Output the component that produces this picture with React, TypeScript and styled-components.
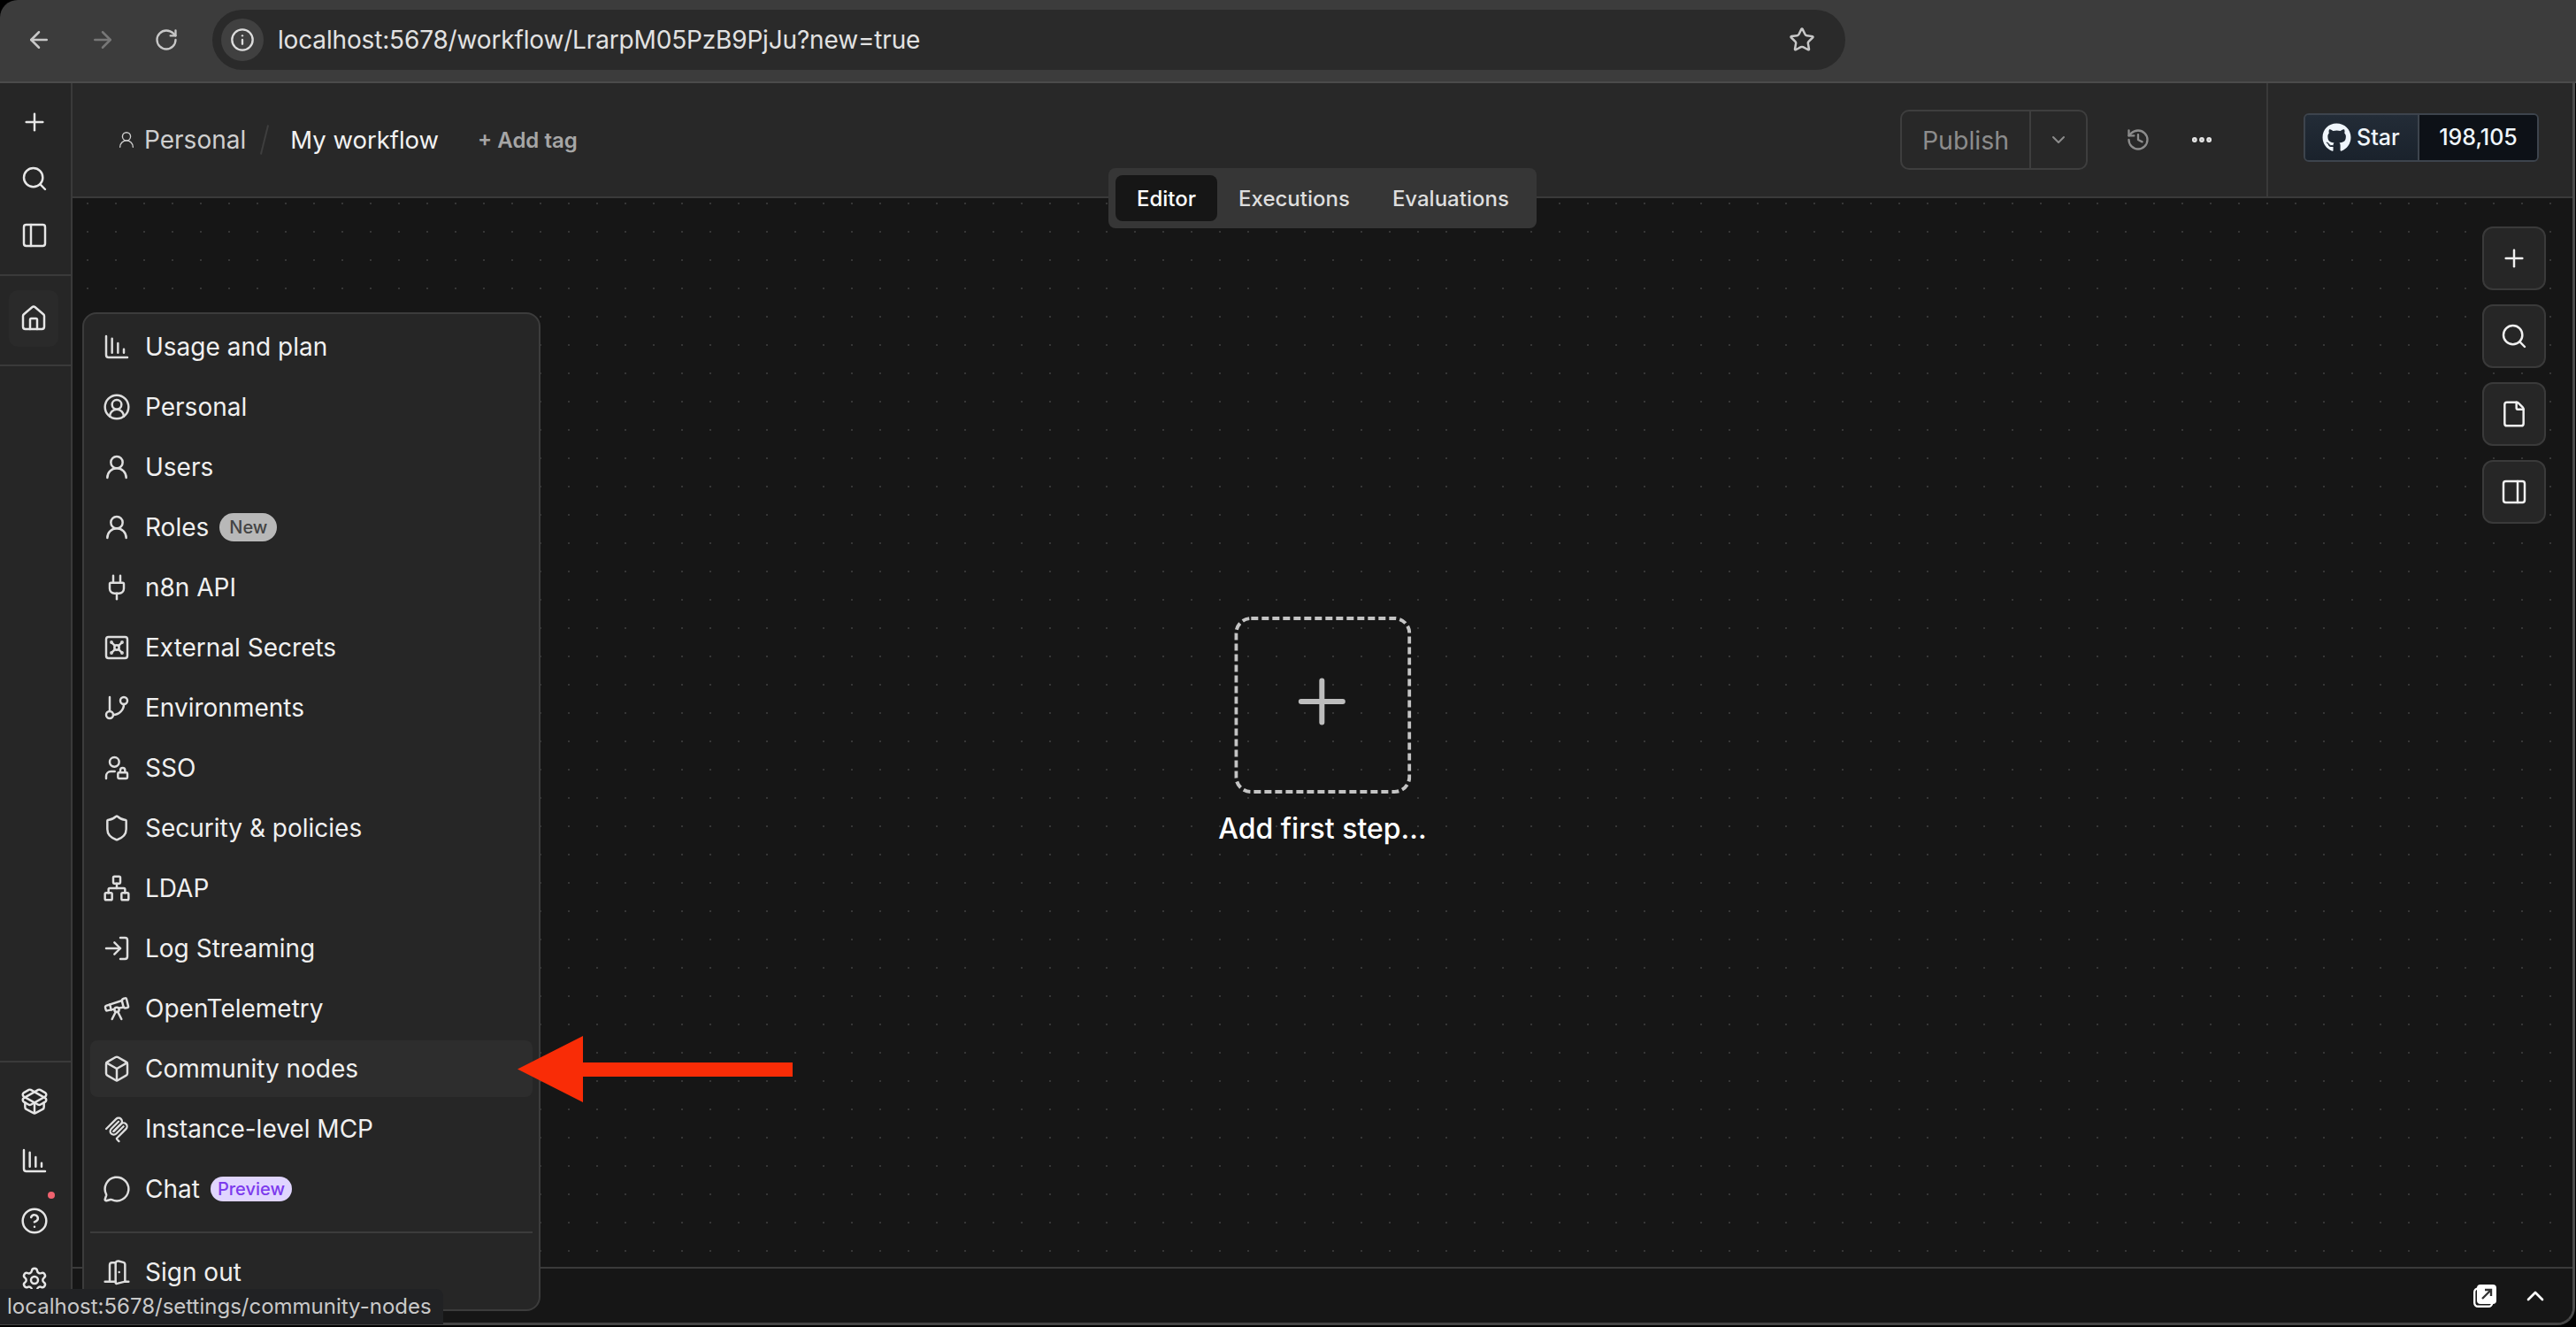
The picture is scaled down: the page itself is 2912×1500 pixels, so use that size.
import React from "react";
import styled, { createGlobalStyle } from "styled-components";
import {
  ArrowLeft,
  ArrowRight,
  Box,
  ChartColumnDecreasing,
  ChevronDown,
  ChevronUp,
  CircleHelp,
  CircleUserRound,
  DoorOpen,
  Ellipsis,
  File,
  GitBranch,
  History,
  House,
  Info,
  LogIn,
  MessageCircle,
  Network,
  PackageOpen,
  PanelLeft,
  PanelRight,
  Plug,
  Plus,
  RotateCw,
  Search,
  Settings,
  Shield,
  Star,
  Telescope,
  UserLock,
  UserRound,
  Vault,
} from "lucide-react";
import { FaGithub } from "react-icons/fa";

const GlobalStyle = createGlobalStyle`
  html, body {
    margin: 0;
    padding: 0;
    background: #000;
  }
  body {
    font-family: Inter, "Liberation Sans", sans-serif;
    -webkit-font-smoothing: antialiased;
  }
`;

// n8n icons sit at 16px css on a 2x screen, so 32 here
const ICON = 32;
const STROKE = 1.85;

const McpIcon = ({ size = ICON }: { size?: number }) => (
  <svg width={size} height={size} viewBox="0 0 195 195" fill="none" stroke="currentColor" strokeWidth="14" strokeLinecap="round">
    <path d="M25 97.85L92.88 29.97C102.26 20.6 117.45 20.6 126.82 29.97C136.2 39.34 136.2 54.54 126.82 63.91L75.56 115.18" />
    <path d="M76.27 114.47L126.82 63.91C136.2 54.54 151.39 54.54 160.77 63.91L161.12 64.27C170.49 73.64 170.49 88.83 161.12 98.21L99.72 159.6C96.6 162.72 96.6 167.79 99.72 170.91L112.33 183.52" />
    <path d="M109.85 46.94L59.65 97.15C50.28 106.52 50.28 121.71 59.65 131.09C69.02 140.46 84.22 140.46 93.59 131.09L143.79 80.88" />
  </svg>
);

const ExternalSquareIcon = () => (
  <svg width="26" height="26" viewBox="0 0 26 26">
    <rect x="1.2" y="4.5" width="20" height="20.3" rx="4" fill="none" stroke="#fff" strokeWidth="2.4" />
    <rect x="4" y="0" width="22" height="22" rx="4" fill="#fff" />
    <path d="M10 16L20 6M13 6h7v7" fill="none" stroke="#333" strokeWidth="2.4" />
  </svg>
);

const AddStepShape = () => (
  <svg width="200" height="200" viewBox="0 0 200 200" fill="none">
    <rect x="2" y="2" width="196" height="196" rx="17" stroke="#c4c4c4" strokeWidth="4" strokeDasharray="8 4" />
    <path d="M75.5 96h47M99 72.5v47" stroke="#bdbdbd" strokeWidth="6" strokeLinecap="round" />
  </svg>
);

const RedArrow = () => (
  <svg width="311" height="75" viewBox="0 0 311 75">
    <path d="M0 37.5L74 0V30H311V46H74V75Z" fill="#f92c06" />
  </svg>
);

const menuItems = [
  { label: "Usage and plan", icon: <ChartColumnDecreasing size={ICON} strokeWidth={STROKE} /> },
  { label: "Personal", icon: <CircleUserRound size={ICON} strokeWidth={STROKE} /> },
  { label: "Users", icon: <UserRound size={ICON} strokeWidth={STROKE} /> },
  { label: "Roles", icon: <UserRound size={ICON} strokeWidth={STROKE} />, tag: "New" },
  { label: "n8n API", icon: <Plug size={ICON} strokeWidth={STROKE} /> },
  { label: "External Secrets", icon: <Vault size={ICON} strokeWidth={STROKE} /> },
  { label: "Environments", icon: <GitBranch size={ICON} strokeWidth={STROKE} /> },
  { label: "SSO", icon: <UserLock size={ICON} strokeWidth={STROKE} /> },
  { label: "Security & policies", icon: <Shield size={ICON} strokeWidth={STROKE} /> },
  { label: "LDAP", icon: <Network size={ICON} strokeWidth={STROKE} /> },
  { label: "Log Streaming", icon: <LogIn size={ICON} strokeWidth={STROKE} /> },
  { label: "OpenTelemetry", icon: <Telescope size={ICON} strokeWidth={STROKE} /> },
  { label: "Community nodes", icon: <Box size={ICON} strokeWidth={STROKE} />, hovered: true },
  { label: "Instance-level MCP", icon: <McpIcon /> },
  { label: "Chat", icon: <MessageCircle size={ICON} strokeWidth={STROKE} />, preview: "Preview" },
];

export default function App() {
  return (
    <Page>
      <GlobalStyle />
      <BrowserBar>
        <NavButton><ArrowLeft size={30} strokeWidth={2} /></NavButton>
        <NavButton $dim><ArrowRight size={30} strokeWidth={2} /></NavButton>
        <NavButton><RotateCw size={28} strokeWidth={2} /></NavButton>
        <AddressBar>
          <SiteInfo><Info size={28} strokeWidth={2} /></SiteInfo>
          <UrlText>localhost:5678/workflow/LrarpM05PzB9PjJu?new=true</UrlText>
          <Bookmark><Star size={30} strokeWidth={2} /></Bookmark>
        </AddressBar>
      </BrowserBar>

      <Body>
        <Sidebar>
          <SideGroup>
            <SideButton><Plus size={ICON} strokeWidth={STROKE} /></SideButton>
            <SideButton><Search size={ICON} strokeWidth={STROKE} /></SideButton>
            <SideButton><PanelLeft size={ICON} strokeWidth={STROKE} /></SideButton>
          </SideGroup>
          <HomeGroup>
            <HomeButton><House size={ICON} strokeWidth={STROKE} /></HomeButton>
          </HomeGroup>
          <SideFooter>
            <SideFooterRow><PackageOpen size={ICON} strokeWidth={STROKE} /></SideFooterRow>
            <SideFooterRow><ChartColumnDecreasing size={ICON} strokeWidth={STROKE} /></SideFooterRow>
            <SideFooterRow>
              <CircleHelp size={ICON} strokeWidth={STROKE} />
              <NoticeDot />
            </SideFooterRow>
            <SideFooterRow><Settings size={ICON} strokeWidth={STROKE} /></SideFooterRow>
          </SideFooter>
        </Sidebar>

        <Main>
          <Header>
            <Crumb>
              <UserRound size={22} strokeWidth={1.5} />
              <span>Personal</span>
            </Crumb>
            <CrumbSlash />
            <WorkflowName>My workflow</WorkflowName>
            <AddTag>+ Add tag</AddTag>
            <HeaderActions>
              <PublishButton>
                <PublishLabel>Publish</PublishLabel>
                <PublishCaret><ChevronDown size={24} strokeWidth={2} /></PublishCaret>
              </PublishButton>
              <HistoryIcon><History size={28} strokeWidth={2} /></HistoryIcon>
              <MoreIcon><Ellipsis size={28} strokeWidth={3} /></MoreIcon>
            </HeaderActions>
            <GithubSection>
              <GithubBadge>
                <GithubStar><FaGithub size={33} />Star</GithubStar>
                <GithubCount>198,105</GithubCount>
              </GithubBadge>
            </GithubSection>
          </Header>

          <Tabs>
            <Tab $active>Editor</Tab>
            <Tab>Executions</Tab>
            <Tab>Evaluations</Tab>
          </Tabs>

          <Canvas>
            <AddStep>
              <AddStepShape />
              <AddStepLabel>Add first step...</AddStepLabel>
            </AddStep>
            <CanvasTools>
              <ToolButton><Plus size={ICON} strokeWidth={STROKE} /></ToolButton>
              <ToolButton><Search size={ICON} strokeWidth={STROKE} /></ToolButton>
              <ToolButton><File size={ICON} strokeWidth={STROKE} /></ToolButton>
              <ToolButton><PanelRight size={ICON} strokeWidth={STROKE} /></ToolButton>
            </CanvasTools>
          </Canvas>

          <BottomBar>
            <ExternalSquareIcon />
            <ChevronUp size={32} strokeWidth={2} />
          </BottomBar>
        </Main>

        <Menu>
          {menuItems.map((item) => (
            <MenuRow key={item.label} $hovered={item.hovered}>
              <MenuIcon>{item.icon}</MenuIcon>
              <span>{item.label}</span>
              {item.tag && <NewTag>{item.tag}</NewTag>}
              {item.preview && <PreviewTag>{item.preview}</PreviewTag>}
            </MenuRow>
          ))}
          <MenuDivider />
          <MenuRow>
            <MenuIcon><DoorOpen size={ICON} strokeWidth={STROKE} /></MenuIcon>
            <span>Sign out</span>
          </MenuRow>
        </Menu>
      </Body>

      <ArrowMark><RedArrow /></ArrowMark>
      <StatusBubble>localhost:5678/settings/community-nodes</StatusBubble>
    </Page>
  );
}

const Page = styled.div`
  position: relative;
  width: 2912px;
  height: 1500px;
  overflow: hidden;
  background: #000;
`;

const BrowserBar = styled.div`
  display: flex;
  align-items: center;
  box-sizing: border-box;
  height: 94px;
  padding: 0 0 2px 8px;
  background: #3c3c3c;
  border-bottom: 2px solid #4b4b4b;
  border-top-left-radius: 20px;
`;

const NavButton = styled.div<{ $dim?: boolean }>`
  display: flex;
  align-items: center;
  justify-content: center;
  width: 72px;
  color: ${(p) => (p.$dim ? "#777" : "#c8c8c8")};
`;

const AddressBar = styled.div`
  display: flex;
  align-items: center;
  box-sizing: border-box;
  width: 1846px;
  height: 68px;
  margin-left: 16px;
  padding: 0 34px 0 10px;
  border-radius: 34px;
  background: #2a2a2a;
`;

const SiteInfo = styled.div`
  display: flex;
  align-items: center;
  justify-content: center;
  width: 48px;
  height: 48px;
  border-radius: 50%;
  background: #404040;
  color: #dcdcdc;
`;

const UrlText = styled.div`
  margin-left: 16px;
  font-size: 28px;
  letter-spacing: -0.16px;
  color: #e2e2e2;
`;

const Bookmark = styled.div`
  display: flex;
  margin-left: auto;
  color: #c8c8c8;
`;

const Body = styled.div`
  position: relative;
  display: flex;
  box-sizing: border-box;
  width: 2911px;
  height: 1404px;
  background: #161616;
  border-right: 3px solid #4a4a4a;
  border-bottom: 3px solid #454545;
  border-bottom-right-radius: 20px;
  overflow: hidden;
`;

const Sidebar = styled.div`
  display: flex;
  flex-direction: column;
  flex: none;
  box-sizing: border-box;
  width: 82px;
  background: #262626;
  border-right: 2px solid #3a3a3a;
  color: #e6e6e6;
`;

const SideGroup = styled.div`
  padding: 12px 0;
  border-bottom: 2px solid #3a3a3a;
`;

const SideButton = styled.div`
  display: flex;
  align-items: center;
  justify-content: center;
  height: 64px;
  padding-right: 2px;
`;

const HomeGroup = styled.div`
  padding: 16px 14px 20px 10px;
  border-bottom: 2px solid #3a3a3a;
`;

const HomeButton = styled(SideButton)`
  padding-right: 0;
  border-radius: 10px;
  background: #2a2a2a;
`;

const SideFooter = styled.div`
  margin-top: auto;
  padding: 10px 0 14px;
  border-top: 2px solid #3a3a3a;
`;

const SideFooterRow = styled.div`
  position: relative;
  display: flex;
  align-items: center;
  justify-content: center;
  height: 67.5px;
  padding-right: 2px;
`;

const NoticeDot = styled.span`
  position: absolute;
  top: 1px;
  left: 54px;
  width: 8px;
  height: 8px;
  border-radius: 50%;
  background: #f0626f;
`;

const Main = styled.div`
  position: relative;
  display: flex;
  flex-direction: column;
  flex: 1;
  min-width: 0;
`;

const Header = styled.div`
  display: flex;
  align-items: center;
  flex: none;
  box-sizing: border-box;
  height: 130px;
  padding-left: 50px;
  background: #282828;
  border-bottom: 2px solid #3a3a3a;
`;

const Crumb = styled.div`
  display: flex;
  align-items: center;
  gap: 9px;
  font-size: 28px;
  color: #cfcfcf;
`;

const CrumbSlash = styled.div`
  width: 2px;
  height: 34px;
  margin: 0 28px 0 20px;
  background: #3e3e3e;
  transform: rotate(14deg);
`;

const WorkflowName = styled.div`
  font-size: 27.5px;
  color: #f2f2f2;
`;

const AddTag = styled.div`
  margin-left: 44px;
  font-size: 24px;
  font-weight: 600;
  color: #a6a6a6;
`;

const HeaderActions = styled.div`
  display: flex;
  align-items: center;
  margin-left: auto;
  padding-right: 59px;
`;

const PublishButton = styled.div`
  display: flex;
  box-sizing: border-box;
  width: 212px;
  height: 68px;
  border: 2px solid #3e3e3e;
  border-radius: 10px;
`;

const PublishLabel = styled.div`
  display: flex;
  align-items: center;
  justify-content: center;
  width: 144px;
  border-right: 2px solid #3e3e3e;
  font-size: 28.5px;
  color: #8c8c8c;
`;

const PublishCaret = styled.div`
  display: flex;
  align-items: center;
  justify-content: center;
  flex: 1;
  color: #8c8c8c;
`;

const HistoryIcon = styled.div`
  display: flex;
  margin-left: 43px;
  color: #8c8c8c;
`;

const MoreIcon = styled.div`
  display: flex;
  margin-left: 44px;
  color: #e6e6e6;
`;

const GithubSection = styled.div`
  display: flex;
  align-items: center;
  box-sizing: border-box;
  height: 100%;
  padding: 0 38px 6px 40px;
  border-left: 2px solid #3a3a3a;
`;

const GithubBadge = styled.div`
  display: flex;
  box-sizing: border-box;
  width: 266px;
  height: 55px;
  border: 2px solid #3d444d;
  border-radius: 6px;
  overflow: hidden;
`;

const GithubStar = styled.div`
  display: flex;
  align-items: center;
  gap: 6px;
  box-sizing: border-box;
  width: 129px;
  padding-left: 19px;
  background: linear-gradient(#232c37, #1a222c);
  border-right: 2px solid #3d444d;
  font-size: 25px;
  font-weight: 500;
  color: #f0f6fc;
`;

const GithubCount = styled.div`
  display: flex;
  align-items: center;
  justify-content: center;
  flex: 1;
  background: #0d1117;
  font-size: 25px;
  font-weight: 500;
  color: #f0f6fc;
`;

const Tabs = styled.div`
  position: absolute;
  z-index: 2;
  top: 96px;
  left: 50%;
  transform: translateX(-50%);
  display: flex;
  box-sizing: border-box;
  width: 484px;
  height: 68px;
  padding: 8px;
  border-radius: 8px;
  background: #363636;
`;

const Tab = styled.div<{ $active?: boolean }>`
  display: flex;
  align-items: center;
  justify-content: center;
  padding: 0 24px;
  border-radius: 8px;
  font-size: 24px;
  font-weight: 500;
  background: ${(p) => (p.$active ? "#161616" : "transparent")};
  color: ${(p) => (p.$active ? "#fff" : "#dedede")};
`;

const Canvas = styled.div`
  position: relative;
  flex: 1;
  background-color: #161616;
  background-image: radial-gradient(circle, #363636 1px, transparent 1.4px);
  background-size: 32px 32px;
  background-position: 1px -10px;
`;

const AddStep = styled.div`
  position: absolute;
  top: 473px;
  left: 50%;
  transform: translateX(-50%);
  display: flex;
  flex-direction: column;
  align-items: center;
`;

const AddStepLabel = styled.div`
  margin-top: 20px;
  font-size: 32px;
  font-weight: 500;
  white-space: nowrap;
  color: #fff;
`;

const CanvasTools = styled.div`
  position: absolute;
  top: 32px;
  right: 30px;
  display: flex;
  flex-direction: column;
  gap: 16px;
`;

const ToolButton = styled.div`
  display: flex;
  align-items: center;
  justify-content: center;
  box-sizing: border-box;
  width: 72px;
  height: 72px;
  border: 2px solid #3a3a3a;
  border-radius: 12px;
  background: #262626;
  color: #f0f0f0;
`;

const BottomBar = styled.div`
  display: flex;
  align-items: center;
  justify-content: flex-end;
  gap: 28px;
  flex: none;
  box-sizing: border-box;
  height: 63px;
  padding-right: 26px;
  background: #161616;
  border-top: 2px solid #3a3a3a;
  color: #fff;
`;

const Menu = styled.div`
  position: absolute;
  z-index: 3;
  top: 259px;
  left: 93px;
  box-sizing: border-box;
  width: 518px;
  height: 1129px;
  padding: 5px 7px;
  border: 2px solid #3c3c3c;
  border-radius: 16px;
  background: #262626;
`;

const MenuRow = styled.div<{ $hovered?: boolean }>`
  display: flex;
  align-items: center;
  box-sizing: border-box;
  height: 64px;
  margin-bottom: 4px;
  padding-left: 14px;
  border-radius: 8px;
  font-size: 28px;
  color: #f0f0f0;
  background: ${(p) => (p.$hovered ? "#2d2d2d" : "transparent")};
`;

const MenuIcon = styled.div`
  display: flex;
  flex: none;
  width: 32px;
  height: 32px;
  margin-right: 16px;
  color: #dedede;
`;

const NewTag = styled.span`
  display: flex;
  align-items: center;
  height: 32px;
  margin-left: 12px;
  padding: 0 11px;
  border-radius: 16px;
  background: #b8b8b8;
  font-size: 20px;
  font-weight: 500;
  color: #444;
`;

const PreviewTag = styled(NewTag)`
  height: 28px;
  padding: 0 8px;
  background: #e0d5ff;
  color: #7c3aed;
`;

const MenuDivider = styled.div`
  height: 2px;
  margin: 16px 0 12px;
  background: #3c3c3c;
`;

const ArrowMark = styled.div`
  position: absolute;
  z-index: 4;
  top: 1171px;
  left: 585px;
  display: flex;
`;

const StatusBubble = styled.div`
  position: absolute;
  z-index: 5;
  left: 0;
  top: 1457px;
  box-sizing: border-box;
  width: 501px;
  height: 40px;
  padding-left: 8px;
  border-top-right-radius: 8px;
  background: #212224;
  font-size: 24px;
  line-height: 40px;
  white-space: nowrap;
  color: #c9c9c9;
`;
